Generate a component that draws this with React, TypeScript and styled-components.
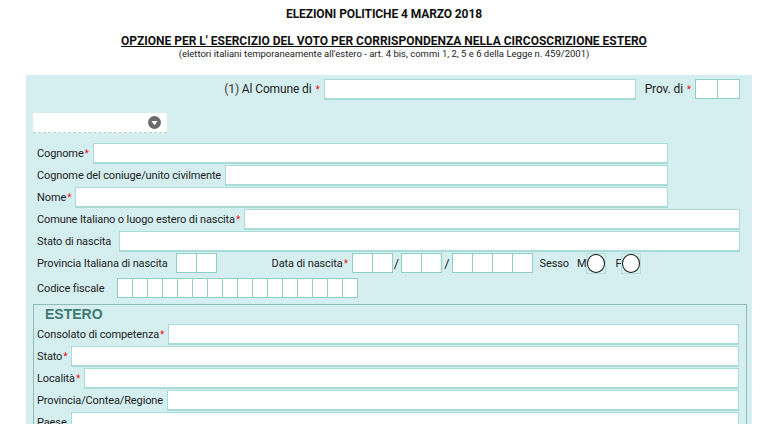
import styled, { createGlobalStyle } from "styled-components";

const GlobalStyle = createGlobalStyle`
  html, body {
    margin: 0;
    padding: 0;
    background: #ffffff;
    overflow: hidden;
  }
  body {
    font-family: Roboto, "Liberation Sans", sans-serif;
    color: #222;
  }
`;

const Page = styled.div`
  width: 768px;
  height: 424px;
  overflow: hidden;
`;

const Header = styled.header`
  text-align: center;
  padding-top: 7px;
  height: 75px;
  box-sizing: border-box;
`;

const Title = styled.h1`
  margin: 0;
  font-size: 12px;
  font-weight: 700;
  color: #111;
  letter-spacing: -0.1px;
`;

const Subtitle = styled.h2`
  margin: 14px 0 0;
  font-size: 12px;
  font-weight: 700;
  color: #111;
  text-decoration: underline;
  line-height: 13px;
`;

const Note = styled.p`
  margin: 0;
  font-size: 9.5px;
  color: #222;
  line-height: 11px;
`;

const Panel = styled.section`
  margin-left: 26px;
  width: 726px;
  background: #d5eff0;
  padding: 3px 12px 0 11px;
  box-sizing: border-box;
  min-height: 360px;
`;

const Row = styled.div<{ $end?: boolean; $gap?: number; $h?: number }>`
  display: flex;
  align-items: center;
  height: ${(p) => p.$h ?? 22}px;
  justify-content: ${(p) => (p.$end ? "flex-end" : "flex-start")};
  gap: ${(p) => p.$gap ?? 4}px;
`;

const Label = styled.span<{ $ml?: number; $mr?: number; $big?: boolean }>`
  font-size: ${(p) => (p.$big ? 12 : 11)}px;
  letter-spacing: -0.12px;
  color: #222;
  white-space: nowrap;
  margin-left: ${(p) => p.$ml ?? 0}px;
  margin-right: ${(p) => p.$mr ?? 0}px;
`;

const Num = styled.span`
  color: #555;
  font-weight: 500;
`;

const Req = styled.span`
  color: #e8141c;
  font-size: 10px;
  margin-left: 1px;
`;

const Input = styled.div<{ $w?: number; $right?: number }>`
  height: 21px;
  box-sizing: border-box;
  background: #fff;
  border: 1px solid #a9dcd6;
  border-bottom: 2px solid #a9dcd6;
  ${(p) => (p.$w ? `width: ${p.$w}px;` : "flex: 1;")}
  margin-right: ${(p) => p.$right ?? 0}px;
`;

const Boxes = styled.div`
  display: flex;
  border: 1px solid #8fcfc4;
  background: #fff;
  height: 20px;
  box-sizing: border-box;
`;

const Box = styled.div<{ $w: number }>`
  width: ${(p) => p.$w}px;
  height: 100%;
  border-left: 1px solid #8fcfc4;
  &:first-child {
    border-left: none;
  }
`;

const Slash = styled.span<{ $l: number; $r: number }>`
  font-size: 13px;
  color: #222;
  margin: 0 ${(p) => p.$r}px 0 ${(p) => p.$l}px;
`;

const SelectRow = styled.div`
  height: 42px;
  display: flex;
  align-items: center;
  padding-top: 4px;
  box-sizing: border-box;
  margin-left: -4px;
`;

const Select = styled.div`
  width: 134px;
  height: 20px;
  background: #fff;
  border-bottom: 1px dashed #b9cfd0;
  display: flex;
  align-items: center;
  justify-content: flex-end;
  padding-right: 6px;
  box-sizing: border-box;
`;

const Radio = styled.div`
  width: 20px;
  height: 21px;
  box-sizing: border-box;
  background: #d5eff0;
  border: 1px solid #b5e0da;
  display: flex;
  align-items: center;
  justify-content: center;
`;

const Circle = styled.div`
  width: 19px;
  height: 19px;
  border-radius: 50%;
  border: 1.5px solid #111;
  box-sizing: border-box;
  background: #fff;
`;

const Fieldset = styled.fieldset`
  margin: 2px -7px 0 -4px;
  padding: 0 7px 0 3px;
  border: 1px solid #93b9b5;
  border-bottom: none;
  min-width: 0;
`;

const Legend = styled.div`
  font-family: "Liberation Sans", Arial, sans-serif;
  font-weight: 700;
  font-size: 14px;
  color: #3f7a74;
  padding: 1px 0 0 8px;
  height: 17px;
`;

const Arrow = () => (
  <svg width="13" height="13" viewBox="0 0 13 13">
    <circle cx="6.5" cy="6.5" r="6.5" fill="#6b6b6b" />
    <path d="M3.4 5 L9.6 5 L6.5 9.2 Z" fill="#fff" />
  </svg>
);

const CharBoxes = ({ n, w }: { n: number; w: number }) => (
  <Boxes>
    {Array.from({ length: n }).map((_, i) => (
      <Box key={i} $w={w} />
    ))}
  </Boxes>
);

const App = () => {
  return (
    <Page>
      <GlobalStyle />
      <Header>
        <Title>ELEZIONI POLITICHE 4 MARZO 2018</Title>
        <Subtitle>
          OPZIONE PER L' ESERCIZIO DEL VOTO PER CORRISPONDENZA NELLA CIRCOSCRIZIONE ESTERO
        </Subtitle>
        <Note>
          (elettori italiani temporaneamente all'estero - art. 4 bis, commi 1, 2, 5 e 6 della Legge n. 459/2001)
        </Note>
      </Header>

      <Panel>
        <Row $end>
          <Label $big>
            <Num>(1)</Num> Al Comune di <Req>*</Req>
          </Label>
          <Input $w={312} />
          <Label $big $ml={5}>
            Prov. di <Req>*</Req>
          </Label>
          <CharBoxes n={2} w={21} />
        </Row>

        <SelectRow>
          <Select>
            <Arrow />
          </Select>
        </SelectRow>

        <Row>
          <Label>
            Cognome<Req>*</Req>
          </Label>
          <Input $right={72} />
        </Row>
        <Row>
          <Label>Cognome del coniuge/unito civilmente</Label>
          <Input $right={72} />
        </Row>
        <Row>
          <Label>
            Nome<Req>*</Req>
          </Label>
          <Input $right={72} />
        </Row>
        <Row>
          <Label>
            Comune Italiano o luogo estero di nascita<Req>*</Req>
          </Label>
          <Input />
        </Row>
        <Row $gap={8}>
          <Label>Stato di nascita</Label>
          <Input />
        </Row>
        <Row $gap={0}>
          <Label $mr={8}>Provincia Italiana di nascita</Label>
          <CharBoxes n={2} w={19} />
          <Label $ml={55} $mr={4}>
            Data di nascita<Req>*</Req>
          </Label>
          <CharBoxes n={2} w={19} />
          <Slash $l={1} $r={2}>/</Slash>
          <CharBoxes n={2} w={19} />
          <Slash $l={2} $r={2}>/</Slash>
          <CharBoxes n={4} w={19} />
          <Label $ml={7}>Sesso</Label>
          <Label $ml={8}>M</Label>
          <Radio>
            <Circle />
          </Radio>
          <Label $ml={9}>F</Label>
          <Radio>
            <Circle />
          </Radio>
        </Row>
        <Row $h={28} $gap={13}>
          <Label>Codice fiscale</Label>
          <CharBoxes n={16} w={14} />
        </Row>

        <Fieldset>
          <Legend>ESTERO</Legend>
          <Row>
            <Label>
              Consolato di competenza<Req>*</Req>
            </Label>
            <Input />
          </Row>
          <Row>
            <Label>
              Stato<Req>*</Req>
            </Label>
            <Input />
          </Row>
          <Row>
            <Label>
              Località<Req>*</Req>
            </Label>
            <Input />
          </Row>
          <Row>
            <Label>Provincia/Contea/Regione</Label>
            <Input />
          </Row>
          <Row>
            <Label>Paese</Label>
            <Input />
          </Row>
        </Fieldset>
      </Panel>
    </Page>
  );
};

export default App;
